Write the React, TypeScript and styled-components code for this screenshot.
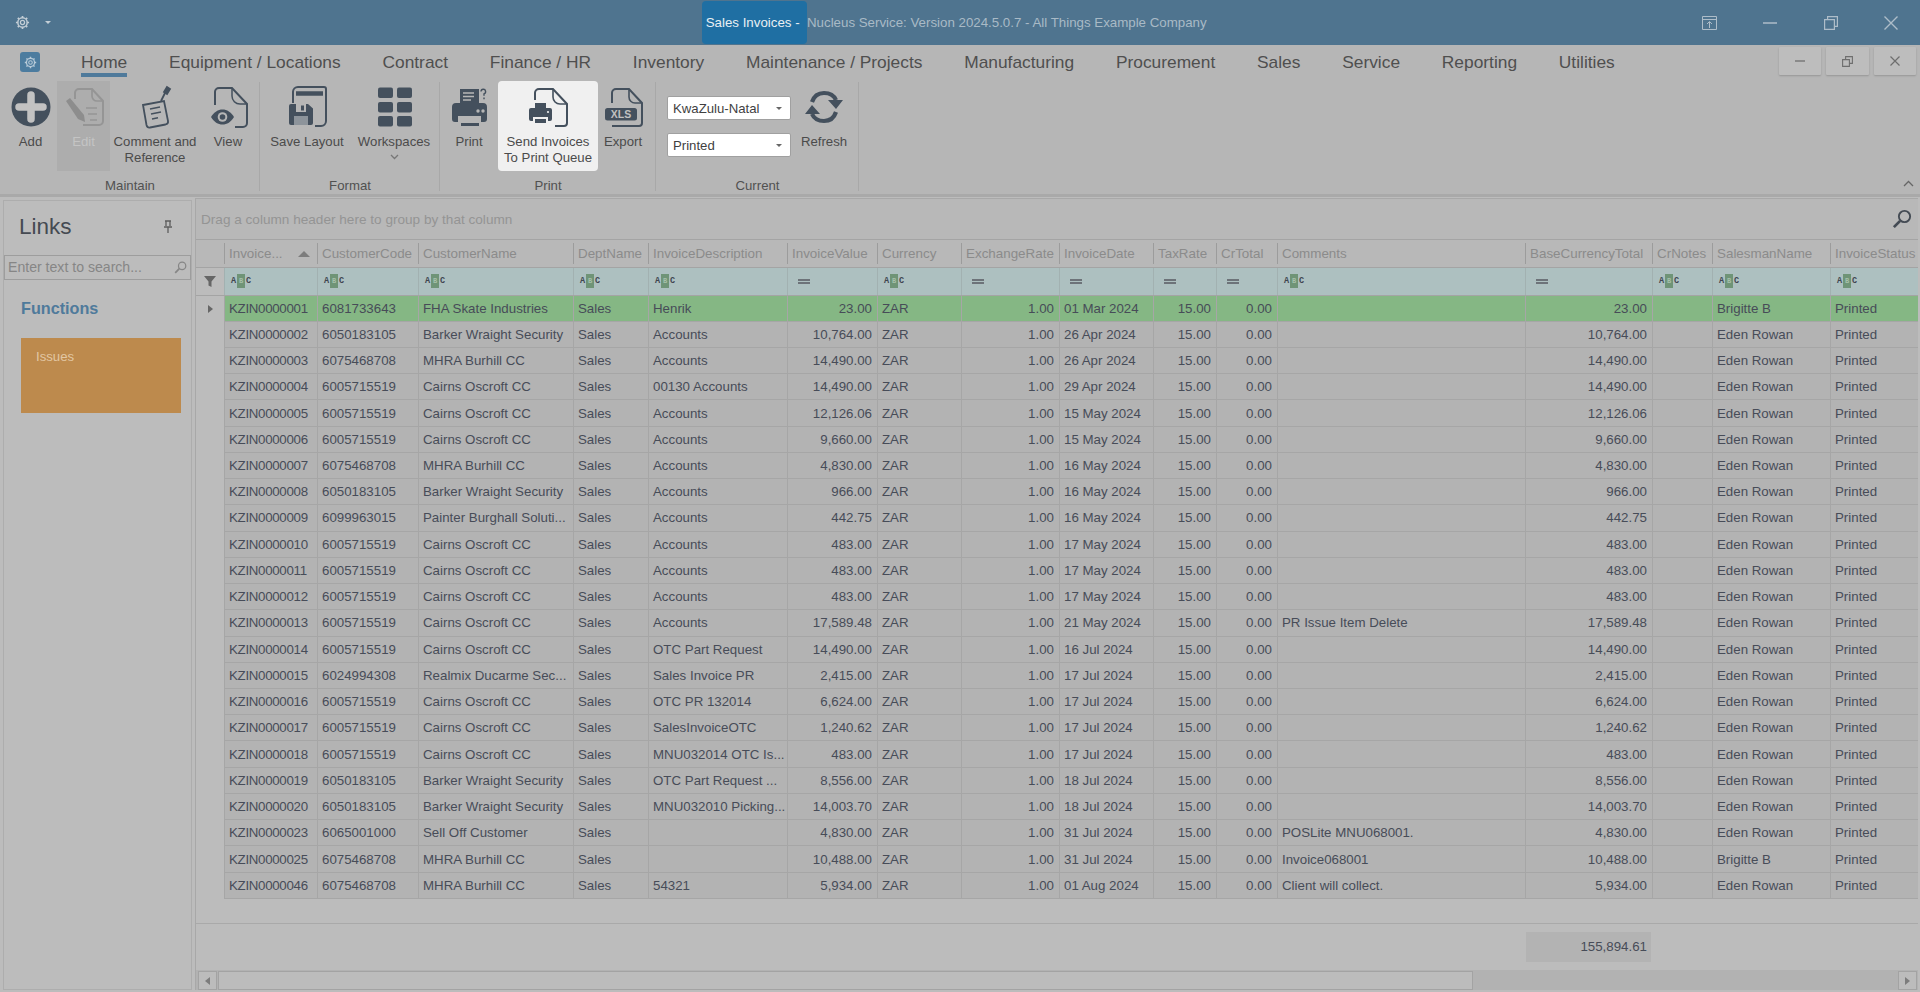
import React from "react";
import styled, { createGlobalStyle } from "styled-components";

const font = `"Liberation Sans", Tahoma, Arial, sans-serif`;
const iconDark = "#44505d";

const Global = createGlobalStyle`
  html, body { margin: 0; padding: 0; background: #bcbcbc; overflow: hidden; }
  body { font-family: ${font}; }
  * { box-sizing: border-box; }
`;

const Page = styled.div`
  width: 1920px;
  height: 992px;
  display: flex;
  flex-direction: column;
  overflow: hidden;
  background: #bcbcbc;
`;

/* Title bar */
const TitleBar = styled.header`
  height: 45px;
  flex: none;
  display: flex;
  align-items: center;
  background: #4f748f;
  color: #a9bac6;
  font-size: 13.3px;
`;
const QuickAccess = styled.div`
  width: 702px;
  display: flex;
  align-items: center;
  gap: 15px;
  padding-left: 15px;
`;
const Caret = styled.span`
  width: 0;
  height: 0;
  border-left: 3.5px solid transparent;
  border-right: 3.5px solid transparent;
  border-top: 3.5px solid #c3ced6;
`;
const TitleActive = styled.div`
  width: 105px;
  height: 43px;
  display: flex;
  align-items: center;
  justify-content: center;
  border-radius: 4px;
  background: #1f6fa3;
  color: #e9eff3;
  white-space: pre;
`;
const TitleRest = styled.div`
  white-space: pre;
`;
const WindowButtons = styled.div`
  margin-left: auto;
  margin-right: -1px;
  display: flex;
`;
const WindowButton = styled.div`
  width: 60.3px;
  height: 45px;
  display: flex;
  align-items: center;
  justify-content: center;
`;

/* Tabs */
const TabRow = styled.nav`
  height: 35px;
  flex: none;
  display: flex;
  align-items: flex-start;
  background: #b6b6b6;
  padding-left: 20px;
`;
const AppIcon = styled.div`
  width: 20px;
  height: 20px;
  margin-top: 7px;
  margin-right: 41px;
  border-radius: 3px;
  background: #4c7c9f;
  display: flex;
  align-items: center;
  justify-content: center;
`;
const Tab = styled.div<{ $active?: boolean }>`
  margin-right: 41.8px;
  height: 32px;
  padding-top: 8px;
  font-size: 17.35px;
  line-height: 19px;
  color: #4f4f4f;
  white-space: nowrap;
  border-bottom: 4px solid ${(p) => (p.$active ? "#4f7a9b" : "transparent")};
`;
const MdiButtons = styled.div`
  margin-left: auto;
  margin-top: 2px;
  display: flex;
  gap: 5px;
  padding-right: 4px;
`;
const MdiButton = styled.div`
  width: 42.5px;
  height: 28px;
  display: flex;
  align-items: center;
  justify-content: center;
  background: #bdbdbd;
  box-shadow: 0 1px 2px rgba(0, 0, 0, 0.18);
  border-radius: 1px;
`;

/* Ribbon */
const Ribbon = styled.section`
  height: 117px;
  flex: none;
  display: flex;
  position: relative;
  background: #b6b6b6;
  border-bottom: 3px solid #a9a9a9;
`;
const RibbonGroup = styled.div<{ $w: number }>`
  width: ${(p) => p.$w}px;
  flex: none;
  display: flex;
  flex-direction: column;
  padding-top: 1px;
  position: relative;
  &::after {
    content: "";
    position: absolute;
    right: 0;
    top: 2px;
    bottom: 3px;
    width: 1px;
    background: #a8a8a8;
  }
`;
const RibbonItems = styled.div`
  height: 90px;
  display: flex;
  align-items: stretch;
`;
const GroupLabel = styled.div`
  margin-top: 7px;
  text-align: center;
  font-size: 13.2px;
  line-height: 16px;
  color: #515151;
`;
const RibbonButton = styled.div<{ $w: number; $kind?: "disabled" | "lit"; $inset?: number }>`
  width: ${(p) => p.$w}px;
  flex: none;
  display: flex;
  flex-direction: column;
  align-items: center;
  padding: 3px 0 0 ${(p) => p.$inset ?? 0}px;
  font-size: 13.2px;
  line-height: 16px;
  text-align: center;
  color: ${(p) => (p.$kind === "disabled" ? "#c4c4c4" : "#4b4b4b")};
  background: ${(p) =>
    p.$kind === "disabled" ? "#adadad" : p.$kind === "lit" ? "#f0f0f0" : "transparent"};
  border-radius: ${(p) => (p.$kind === "lit" ? "4px" : "0")};
  white-space: nowrap;
`;
const IconSlot = styled.div`
  width: 50px;
  height: 46px;
  margin-bottom: 4px;
  display: flex;
  align-items: center;
  justify-content: center;
`;
const Chevron = styled.div`
  margin-top: 3px;
  line-height: 6px;
`;
const ComboColumn = styled.div`
  width: 135px;
  flex: none;
  display: flex;
  flex-direction: column;
  gap: 13px;
  padding: 15px 0 0 11px;
`;
const Combo = styled.div`
  width: 124px;
  height: 24px;
  display: flex;
  align-items: center;
  justify-content: space-between;
  padding: 0 5px;
  background: #ffffff;
  border: 1px solid #a0a0a0;
  border-radius: 2px;
  font-size: 13.2px;
  color: #3f3f3f;
`;
const ComboCaret = styled.span`
  width: 0;
  height: 0;
  margin-right: 3px;
  border-left: 3.5px solid transparent;
  border-right: 3.5px solid transparent;
  border-top: 3.5px solid #666;
`;
const Collapse = styled.div`
  position: absolute;
  right: 6px;
  bottom: 3px;
`;

/* Main */
const Main = styled.main`
  flex: 1;
  min-height: 0;
  display: flex;
  padding: 1px 2px 2px 3px;
  background: #bcbcbc;
`;
const Sidebar = styled.aside`
  width: 189px;
  flex: none;
  margin-top: 2px;
  border: 1px solid #adadad;
  padding: 0;
  background: #bcbcbc;
`;
const LinksHead = styled.div`
  height: 54px;
  display: flex;
  align-items: center;
  justify-content: space-between;
  padding: 0 18px 3px 15px;
  font-size: 22.5px;
  color: #454a52;
`;
const SearchBox = styled.div`
  height: 24.5px;
  display: flex;
  align-items: center;
  justify-content: space-between;
  padding: 0 3px;
  border: 1px solid #9d9d9d;
  font-size: 14.1px;
  color: #868686;
`;
const SectionTitle = styled.div`
  margin: 18.5px 0 0 17px;
  font-size: 16.2px;
  font-weight: 700;
  line-height: 20px;
  color: #4f7a9b;
`;
const IssueCard = styled.div`
  width: 160px;
  height: 75px;
  margin: 20px 0 0 17px;
  padding: 11px 15px;
  background: #bd8a4d;
  font-size: 13.2px;
  color: #e2c7a3;
`;
const GridPanel = styled.div`
  flex: 1;
  min-width: 0;
  margin-left: 3px;
  display: flex;
  flex-direction: column;
  border-left: 1px solid #a8a8a8;
  border-top: 1px solid #a8a8a8;
  background: #bcbcbc;
`;
const GroupPanel = styled.div`
  height: 41px;
  flex: none;
  display: flex;
  align-items: center;
  justify-content: space-between;
  padding: 0 6px 0 5px;
  font-size: 13.6px;
  color: #949494;
  background: #b8b8b8;
  border-bottom: 1px solid #a4a4a4;
`;

const colWidths = [28, 93, 101, 155, 75, 139, 90, 84, 98, 94, 63, 61, 248, 127, 60, 118, 90];
const template = colWidths.map((w) => `${w}px`).join(" ");

const GridBody = styled.div`
  flex: none;
  overflow: hidden;
  background: #bcbcbc;
`;
const Row = styled.div`
  display: grid;
  grid-template-columns: ${template};
  width: 1724px;
`;
const HeaderRow = styled(Row)`
  height: 28px;
  background: #b8b8b8;
  border-bottom: 1px solid #a4a4a4;
`;
const HeaderCell = styled.div`
  position: relative;
  display: flex;
  align-items: center;
  justify-content: space-between;
  padding: 0 5px;
  font-size: 13.4px;
  color: #8b8b8b;
  white-space: nowrap;
  overflow: hidden;
  &::before {
    content: "";
    position: absolute;
    left: 0;
    top: 3px;
    bottom: 3px;
    width: 1px;
    background: #9c9c9c;
  }
`;
const HeaderStub = styled.div`
  background: #b8b8b8;
`;
const SortArrow = styled.span`
  width: 0;
  height: 0;
  margin-right: 2px;
  border-left: 6px solid transparent;
  border-right: 6px solid transparent;
  border-bottom: 6px solid #7d7d7d;
`;
const FilterRow = styled(Row)`
  height: 27.5px;
  background: #adc0c0;
  border-bottom: 1px solid #a4a4a4;
`;
const FilterCell = styled.div`
  display: flex;
  align-items: center;
  padding-left: 6px;
  border-left: 1px solid #a2b1b1;
`;
const FilterStub = styled.div`
  display: flex;
  align-items: center;
  justify-content: center;
  background: #bcbcbc;
`;
const AbcIcon = styled.span`
  display: inline-flex;
  align-items: center;
  gap: 1px;
  font-family: "Liberation Mono", monospace;
  font-size: 8.5px;
  font-weight: 700;
  color: #3f4650;
`;
const AbcMid = styled.span`
  width: 8px;
  height: 14px;
  display: flex;
  align-items: center;
  justify-content: center;
  background: #6f9477;
  color: #a6c0ab;
  font-size: 7px;
`;
const EqualsIcon = styled.span`
  width: 12px;
  height: 5px;
  margin-left: 4px;
  border-top: 2px solid #6d7379;
  border-bottom: 2px solid #6d7379;
`;
const DataRow = styled(Row)<{ $selected?: boolean }>`
  height: 26.24px;
  background: ${(p) => (p.$selected ? "#85b784" : "#b3b3b3")};
`;
const Indicator = styled.div`
  display: flex;
  align-items: center;
  justify-content: center;
  background: #bcbcbc;
`;
const IndicatorArrow = styled.span`
  width: 0;
  height: 0;
  border-top: 4.5px solid transparent;
  border-bottom: 4.5px solid transparent;
  border-left: 5px solid #666;
`;
const Cell = styled.div<{ $right?: boolean }>`
  display: flex;
  align-items: center;
  justify-content: ${(p) => (p.$right ? "flex-end" : "flex-start")};
  padding: 0 5px 0 4px;
  font-size: 13.3px;
  color: #474c58;
  white-space: nowrap;
  overflow: hidden;
  border-left: 1px solid #a6a6a6;
  border-bottom: 1px solid #a6a6a6;
  &:nth-child(2) {
    letter-spacing: -0.3px;
  }
`;
const Spacer = styled.div`
  height: 25px;
  flex: none;
  border-bottom: 1px solid #a9a9a9;
`;
const Summary = styled.div`
  flex: 1;
  min-height: 0;
  display: flex;
  padding: 8px 0 0 1330px;
`;
const SummaryBox = styled.div`
  width: 125px;
  height: 30px;
  display: flex;
  align-items: center;
  justify-content: flex-end;
  padding-right: 4px;
  background: #b3b3b3;
  font-size: 13.3px;
  color: #474c58;
`;
const ScrollBar = styled.div`
  height: 20px;
  flex: none;
  display: flex;
  align-items: stretch;
  gap: 1px;
  padding: 1px 1px 0 2px;
  background: #b2b2b2;
`;
const ScrollButton = styled.div`
  width: 19px;
  display: flex;
  align-items: center;
  justify-content: center;
  background: #bcbcbc;
  border: 1px solid #a3a3a3;
`;
const ScrollThumb = styled.div`
  width: 1255px;
  background: #bcbcbc;
  border: 1px solid #a3a3a3;
`;
const ScrollTrack = styled.div`
  flex: 1;
`;
const ArrowLeft = styled.span`
  border-top: 4px solid transparent;
  border-bottom: 4px solid transparent;
  border-right: 5px solid #7c7c7c;
`;
const ArrowRight = styled.span`
  border-top: 4px solid transparent;
  border-bottom: 4px solid transparent;
  border-left: 5px solid #7c7c7c;
`;

/* ---- icons ---- */
const Gear = ({ size = 15, color = "#c3ced6" }: { size?: number; color?: string }) => (
  <svg width={size} height={size} viewBox="0 0 16 16" fill="none" stroke={color}>
    <circle cx="8" cy="8" r="2.2" strokeWidth="1.3" />
    <circle cx="8" cy="8" r="5" strokeWidth="1.6" />
    <path d="M8 1v2M8 13v2M1 8h2M13 8h2M3 3l1.4 1.4M11.6 11.6L13 13M13 3l-1.4 1.4M4.4 11.6L3 13" strokeWidth="1.8" />
  </svg>
);

const AddIcon = () => (
  <svg width="40" height="46" viewBox="0 0 40 46">
    <circle cx="20" cy="23" r="19.5" fill={iconDark} />
    <path d="M20 11v24M8 23h24" stroke="#c2c2c2" strokeWidth="7.5" strokeLinecap="round" />
  </svg>
);
const EditIcon = () => (
  <svg width="42" height="48" viewBox="0 0 42 48" fill="none" stroke="#959595" strokeWidth="2">
    <path d="M12 16V10a4 4 0 0 1 4-4h13l11 12v20a4 4 0 0 1-4 4H20" />
    <path d="M29 6v7a5 5 0 0 0 5 5h6M23 25h11M25 31h9M27 37h7" strokeWidth="1.7" />
    <path d="M3 18l4-3 14 17 1 7-7-3z" fill="#8d8d8d" stroke="none" />
  </svg>
);
const CommentIcon = () => (
  <svg width="40" height="48" viewBox="0 0 40 48" fill="none" stroke={iconDark} strokeWidth="1.8">
    <path d="M8 22l21-4 4 20c.4 2-.5 3-2.500 3.500L15 44.500c-2 .3-3-.5-3.500-2.500z" />
    <path d="M15 26l10-2M16 31l10-2M17 36l6-1.200" strokeWidth="1.500" />
    <path d="M26 18l4-8" strokeWidth="1.800" />
    <path d="M29 9l3-5 3 2-3 5z" fill={iconDark} />
  </svg>
);
const ViewIcon = () => (
  <svg width="40" height="48" viewBox="0 0 40 48" fill="none" stroke={iconDark} strokeWidth="2">
    <path d="M7 22V9a4 4 0 0 1 4-4h13l15 16v19a4 4 0 0 1-4 4h-8" />
    <path d="M24 5v8a8 8 0 0 0 8 8h7" strokeWidth="1.500" />
    <path d="M3 34c3-5 7-7.500 11.500-7.500S23 29 26 34c-3 5-7 7.500-11.500 7.500S6 39 3 34z" fill={iconDark} stroke="none" />
    <circle cx="14.500" cy="34" r="4.800" fill="#b6b6b6" stroke="none" />
    <circle cx="14.500" cy="34" r="2.800" fill={iconDark} stroke="none" />
  </svg>
);
const SaveIcon = () => (
  <svg width="42" height="48" viewBox="0 0 42 48" fill="none">
    <path d="M7 20V9a5 5 0 0 1 5-5h26a2 2 0 0 1 2 2v32a5 5 0 0 1-5 5h-6" stroke={iconDark} strokeWidth="2" />
    <path d="M10 10.500h27" stroke={iconDark} strokeWidth="4.500" />
    <path d="M5 21h17l5 4.500V40a2 2 0 0 1-2 2H5a2 2 0 0 1-2-2V23a2 2 0 0 1 2-2z" fill={iconDark} />
    <path d="M10 21h10v8H10z" fill="#b6b6b6" />
    <path d="M15 22.500h3v5h-3z" fill={iconDark} />
    <path d="M8 33h14v9H8z" fill="#8d949b" />
  </svg>
);
const WorkspacesIcon = () => (
  <svg width="36" height="48" viewBox="0 0 36 48" fill={iconDark}>
    {[2, 21].map((x) =>
      [4.5, 19, 33].map((y) => <rect key={`${x}-${y}`} x={x} y={y} width="15" height="10.500" rx="2" />)
    )}
  </svg>
);
const PrintIcon = () => (
  <svg width="40" height="46" viewBox="-2 0 40 46">
    <path d="M9 5h19v16H9z" fill={iconDark} />
    <path d="M12 9h11M12 12.500h11M12 16h8" stroke="#b6b6b6" strokeWidth="1.600" />
    <path d="M30 7.500a2.300 2.300 0 1 1 3 2.300v2M33 13.500v1.800" stroke={iconDark} strokeWidth="1.400" fill="none" />
    <path d="M5 19h27a4 4 0 0 1 4 4v12a3 3 0 0 1-3 3h-3v-6H7v6H4a3 3 0 0 1-3-3V23a4 4 0 0 1 4-4z" fill={iconDark} />
    <circle cx="27" cy="27" r="1.700" fill="#b6b6b6" />
    <circle cx="32" cy="27" r="1.700" fill="#b6b6b6" />
    <path d="M10 39h18v3H10z" fill={iconDark} />
  </svg>
);
const SendIcon = () => (
  <svg width="40" height="48" viewBox="0 0 40 48" fill="none">
    <path d="M7 17V10a4 4 0 0 1 4-4h14l14 15v19a3 3 0 0 1-3 3h-9" stroke={iconDark} strokeWidth="2" />
    <path d="M25 6v8a7 7 0 0 0 7 7h7" stroke={iconDark} strokeWidth="1.600" />
    <path d="M7 20h11v6H7z" fill={iconDark} />
    <path d="M3 25h19a2 2 0 0 1 2 2v9a2 2 0 0 1-2 2h-2v-4H5v4H3a2 2 0 0 1-2-2v-9a2 2 0 0 1 2-2z" fill={iconDark} />
    <path d="M7 36h11v4H7z" fill={iconDark} />
    <circle cx="20" cy="29" r="1.100" fill="#f0f0f0" />
  </svg>
);
const ExportIcon = () => (
  <svg width="42" height="48" viewBox="0 0 42 48" fill="none">
    <path d="M10 20V10a4 4 0 0 1 4-4h13l13 14v20a3 3 0 0 1-3 3H10" stroke={iconDark} strokeWidth="2" />
    <path d="M27 6v8a6 6 0 0 0 6 6h7" stroke={iconDark} strokeWidth="1.600" />
    <rect x="3" y="25" width="32" height="12.500" rx="2.500" fill={iconDark} />
    <text x="19" y="35.300" textAnchor="middle" fontFamily={font} fontSize="10.500" fontWeight="700" fill="#c0c0c0">
      XLS
    </text>
  </svg>
);
const RefreshIcon = () => (
  <svg width="40" height="44" viewBox="0 0 40 44" fill="none" stroke={iconDark} strokeWidth="4.200">
    <path d="M8 17C10 11 14 8 20 8c6 0 10 2.500 12 7" />
    <path d="M32 27c-2 6-6 9-12 9-6 0-10-2.500-12-7" />
    <path d="M24 15h15l-7 9z M1 29h15L8 20z" fill={iconDark} stroke="none" />
  </svg>
);
const PinIcon = () => (
  <svg width="10" height="13" viewBox="0 0 10 13" fill="none" stroke="#5e5e5e" strokeWidth="1.300">
    <path d="M2 1h6M3 1v5M7 1v5M1 7h8M5 7v6" />
  </svg>
);
const SearchIcon = ({ size, color }: { size: number; color: string }) => (
  <svg width={size} height={size} viewBox="0 0 16 16" fill="none" stroke={color}>
    <circle cx="10" cy="6" r="4.500" strokeWidth="1.500" />
    <path d="M6.500 9.500L1.500 14.500" strokeWidth="2.200" />
  </svg>
);
const FunnelIcon = () => (
  <svg width="12" height="11" viewBox="0 0 12 11" fill="#666">
    <path d="M0 0h12L7.500 5.500V11l-3-1.500v-4z" />
  </svg>
);
const SmallChevron = () => (
  <svg width="9" height="6" viewBox="0 0 9 6" fill="none" stroke="#777" strokeWidth="1.300">
    <path d="M1 1l3.500 3.500L8 1" />
  </svg>
);

const Abc = () => (
  <AbcIcon>
    A<AbcMid>B</AbcMid>C
  </AbcIcon>
);

const tabs = [
  "Equipment / Locations",
  "Contract",
  "Finance / HR",
  "Inventory",
  "Maintenance / Projects",
  "Manufacturing",
  "Procurement",
  "Sales",
  "Service",
  "Reporting",
  "Utilities",
];

const headers: string[] = [
  "Invoice...",
  "CustomerCode",
  "CustomerName",
  "DeptName",
  "InvoiceDescription",
  "InvoiceValue",
  "Currency",
  "ExchangeRate",
  "InvoiceDate",
  "TaxRate",
  "CrTotal",
  "Comments",
  "BaseCurrencyTotal",
  "CrNotes",
  "SalesmanName",
  "InvoiceStatus",
];
const numericFilter = [false, false, false, false, false, true, false, true, true, true, true, false, true, false, false, false];
const rightAligned = new Set([5, 7, 9, 10, 12]);

const BARKER: [string, string] = ["6050183105", "Barker Wraight Security"];
const MHRA: [string, string] = ["6075468708", "MHRA Burhill CC"];
const CAIRNS: [string, string] = ["6005715519", "Cairns Oscroft CC"];

type Rec = [string, [string, string], string, string, string, string?, string?];
const records: Rec[] = [
  ["0001", ["6081733643", "FHA Skate Industries"], "Henrik", "23.00", "01 Mar 2024", "", "Brigitte B"],
  ["0002", BARKER, "Accounts", "10,764.00", "26 Apr 2024"],
  ["0003", MHRA, "Accounts", "14,490.00", "26 Apr 2024"],
  ["0004", CAIRNS, "00130 Accounts", "14,490.00", "29 Apr 2024"],
  ["0005", CAIRNS, "Accounts", "12,126.06", "15 May 2024"],
  ["0006", CAIRNS, "Accounts", "9,660.00", "15 May 2024"],
  ["0007", MHRA, "Accounts", "4,830.00", "16 May 2024"],
  ["0008", BARKER, "Accounts", "966.00", "16 May 2024"],
  ["0009", ["6099963015", "Painter Burghall Soluti..."], "Accounts", "442.75", "16 May 2024"],
  ["0010", CAIRNS, "Accounts", "483.00", "17 May 2024"],
  ["0011", CAIRNS, "Accounts", "483.00", "17 May 2024"],
  ["0012", CAIRNS, "Accounts", "483.00", "17 May 2024"],
  ["0013", CAIRNS, "Accounts", "17,589.48", "21 May 2024", "PR Issue Item Delete"],
  ["0014", CAIRNS, "OTC Part Request", "14,490.00", "16 Jul 2024"],
  ["0015", ["6024994308", "Realmix Ducarme Sec..."], "Sales Invoice PR", "2,415.00", "17 Jul 2024"],
  ["0016", CAIRNS, "OTC PR 132014", "6,624.00", "17 Jul 2024"],
  ["0017", CAIRNS, "SalesInvoiceOTC", "1,240.62", "17 Jul 2024"],
  ["0018", CAIRNS, "MNU032014 OTC Is...", "483.00", "17 Jul 2024"],
  ["0019", BARKER, "OTC Part Request ...", "8,556.00", "18 Jul 2024"],
  ["0020", BARKER, "MNU032010 Picking...", "14,003.70", "18 Jul 2024"],
  ["0023", ["6065001000", "Sell Off Customer"], "", "4,830.00", "31 Jul 2024", "POSLite MNU068001."],
  ["0025", MHRA, "", "10,488.00", "31 Jul 2024", "Invoice068001", "Brigitte B"],
  ["0046", MHRA, "54321", "5,934.00", "01 Aug 2024", "Client will collect."],
];

const toCells = (r: Rec): string[] => [
  `KZIN000${r[0]}`,
  r[1][0],
  r[1][1],
  "Sales",
  r[2],
  r[3],
  "ZAR",
  "1.00",
  r[4],
  "15.00",
  "0.00",
  r[5] ?? "",
  r[3],
  "",
  r[6] ?? "Eden Rowan",
  "Printed",
];

export default function App() {
  return (
    <Page>
      <Global />
      <TitleBar>
        <QuickAccess>
          <Gear />
          <Caret />
        </QuickAccess>
        <TitleActive>{"Sales Invoices - "}</TitleActive>
        <TitleRest>Nucleus Service: Version 2024.5.0.7 - All Things Example Company</TitleRest>
        <WindowButtons>
          <WindowButton>
            <svg width="15" height="14" viewBox="0 0 15 14" fill="none" stroke="#aebdc9" strokeWidth="1">
              <path d="M.5.500h14v13H.5zM.5 3.500h14M7.500 12V6M5 8l2.500-2.500L10 8" />
            </svg>
          </WindowButton>
          <WindowButton>
            <svg width="14" height="2" viewBox="0 0 14 2" stroke="#aebdc9" strokeWidth="1.500">
              <path d="M0 1h14" />
            </svg>
          </WindowButton>
          <WindowButton>
            <svg width="14" height="14" viewBox="0 0 14 14" fill="none" stroke="#aebdc9" strokeWidth="1.200">
              <path d="M.6 3.600h9.800v9.800H.6zM3.600 3.600V.6h9.800v9.800h-3" />
            </svg>
          </WindowButton>
          <WindowButton>
            <svg width="14" height="14" viewBox="0 0 14 14" stroke="#aebdc9" strokeWidth="1.400">
              <path d="M.5.500l13 13M13.500.500l-13 13" />
            </svg>
          </WindowButton>
        </WindowButtons>
      </TitleBar>

      <TabRow>
        <AppIcon>
          <Gear size={13} color="#b7cad8" />
        </AppIcon>
        <Tab $active>Home</Tab>
        {tabs.map((t) => (
          <Tab key={t}>{t}</Tab>
        ))}
        <MdiButtons>
          <MdiButton>
            <svg width="10" height="2" viewBox="0 0 10 2" stroke="#7a7a7a" strokeWidth="1.500">
              <path d="M0 1h10" />
            </svg>
          </MdiButton>
          <MdiButton>
            <svg width="11" height="11" viewBox="0 0 11 11" fill="none" stroke="#6e6e6e" strokeWidth="1.100">
              <path d="M.6 3.600h6.800v6.800H.6zM3.600 3.600V.6h6.800v6.800h-3" />
            </svg>
          </MdiButton>
          <MdiButton>
            <svg width="10" height="10" viewBox="0 0 10 10" stroke="#6e6e6e" strokeWidth="1.200">
              <path d="M.5.500l9 9M9.500.500l-9 9" />
            </svg>
          </MdiButton>
        </MdiButtons>
      </TabRow>

      <Ribbon>
        <RibbonGroup $w={260}>
          <RibbonItems>
            <RibbonButton $w={57} $inset={4}>
              <IconSlot><AddIcon /></IconSlot>
              Add
            </RibbonButton>
            <RibbonButton $w={53} $kind="disabled">
              <IconSlot><EditIcon /></IconSlot>
              Edit
            </RibbonButton>
            <RibbonButton $w={90}>
              <IconSlot><CommentIcon /></IconSlot>
              Comment and
              <br />
              Reference
            </RibbonButton>
            <RibbonButton $w={56}>
              <IconSlot><ViewIcon /></IconSlot>
              View
            </RibbonButton>
          </RibbonItems>
          <GroupLabel>Maintain</GroupLabel>
        </RibbonGroup>
        <RibbonGroup $w={180}>
          <RibbonItems>
            <RibbonButton $w={94}>
              <IconSlot><SaveIcon /></IconSlot>
              Save Layout
            </RibbonButton>
            <RibbonButton $w={80}>
              <IconSlot><WorkspacesIcon /></IconSlot>
              Workspaces
              <Chevron><SmallChevron /></Chevron>
            </RibbonButton>
          </RibbonItems>
          <GroupLabel>Format</GroupLabel>
        </RibbonGroup>
        <RibbonGroup $w={216}>
          <RibbonItems>
            <RibbonButton $w={58}>
              <IconSlot><PrintIcon /></IconSlot>
              Print
            </RibbonButton>
            <RibbonButton $w={100} $kind="lit">
              <IconSlot><SendIcon /></IconSlot>
              Send Invoices
              <br />
              To Print Queue
            </RibbonButton>
            <RibbonButton $w={50}>
              <IconSlot><ExportIcon /></IconSlot>
              Export
            </RibbonButton>
          </RibbonItems>
          <GroupLabel>Print</GroupLabel>
        </RibbonGroup>
        <RibbonGroup $w={203}>
          <RibbonItems>
            <ComboColumn>
              <Combo>KwaZulu-Natal<ComboCaret /></Combo>
              <Combo>Printed<ComboCaret /></Combo>
            </ComboColumn>
            <RibbonButton $w={66}>
              <IconSlot><RefreshIcon /></IconSlot>
              Refresh
            </RibbonButton>
          </RibbonItems>
          <GroupLabel>Current</GroupLabel>
        </RibbonGroup>
        <Collapse>
          <svg width="11" height="7" viewBox="0 0 11 7" fill="none" stroke="#666" strokeWidth="1.300">
            <path d="M1 6l4.500-4.500L10 6" />
          </svg>
        </Collapse>
      </Ribbon>

      <Main>
        <Sidebar>
          <LinksHead>
            Links
            <PinIcon />
          </LinksHead>
          <SearchBox>
            Enter text to search...
            <SearchIcon size={13} color="#868686" />
          </SearchBox>
          <SectionTitle>Functions</SectionTitle>
          <IssueCard>Issues</IssueCard>
        </Sidebar>
        <GridPanel>
          <GroupPanel>
            Drag a column header here to group by that column
            <SearchIcon size={20} color="#444b54" />
          </GroupPanel>
          <GridBody>
            <HeaderRow>
              <HeaderStub />
              {headers.map((h, i) => (
                <HeaderCell key={h}>
                  {h}
                  {i === 0 && <SortArrow />}
                </HeaderCell>
              ))}
            </HeaderRow>
            <FilterRow>
              <FilterStub><FunnelIcon /></FilterStub>
              {numericFilter.map((n, i) => (
                <FilterCell key={i}>{n ? <EqualsIcon /> : <Abc />}</FilterCell>
              ))}
            </FilterRow>
            {records.map((r, ri) => (
              <DataRow key={r[0]} $selected={ri === 0}>
                <Indicator>{ri === 0 && <IndicatorArrow />}</Indicator>
                {toCells(r).map((c, ci) => (
                  <Cell key={ci} $right={rightAligned.has(ci)}>
                    {c}
                  </Cell>
                ))}
              </DataRow>
            ))}
          </GridBody>
          <Spacer />
          <Summary>
            <SummaryBox>155,894.61</SummaryBox>
          </Summary>
          <ScrollBar>
            <ScrollButton><ArrowLeft /></ScrollButton>
            <ScrollThumb />
            <ScrollTrack />
            <ScrollButton><ArrowRight /></ScrollButton>
          </ScrollBar>
        </GridPanel>
      </Main>
    </Page>
  );
}
